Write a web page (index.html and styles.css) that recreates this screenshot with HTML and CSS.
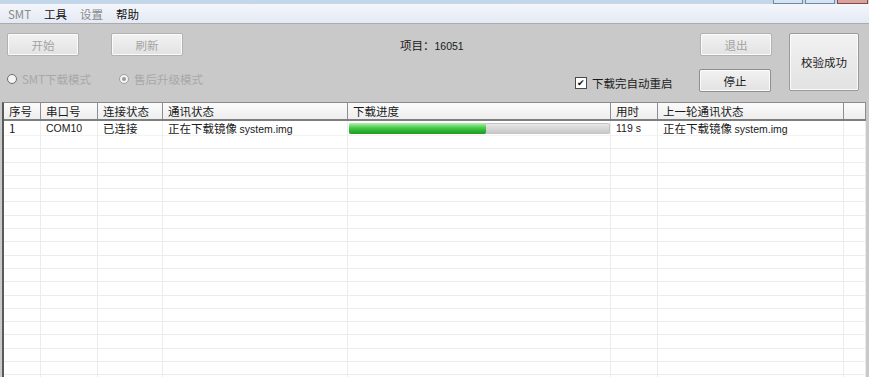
FILE: index.html
```html
<!DOCTYPE html>
<html lang="zh-CN">
<head>
    <meta charset="UTF-8">
    <title>SMT下载工具</title>
    <link rel="stylesheet" href="styles.css">
</head>
<body>
    <div class="titlebar">
        <div class="caption-btns">
            <span class="cap"></span>
            <span class="cap"></span>
            <span class="cap close"></span>
        </div>
    </div>
    <div class="menubar">
        <span class="menu off">SMT</span>
        <span class="menu">工具</span>
        <span class="menu off">设置</span>
        <span class="menu">帮助</span>
    </div>
    <div class="panel">
        <div class="controls">
            <div class="row">
                <button class="btn" disabled>开始</button>
                <button class="btn btn-refresh" disabled>刷新</button>
                <span class="project">项目：<span class="num">16051</span></span>
                <button class="btn btn-right" disabled>退出</button>
            </div>
            <div class="row row2">
                <label class="radio off"><span class="dot"></span>SMT下载模式</label>
                <label class="radio off radio2"><span class="dot checked"></span>售后升级模式</label>
                <label class="check"><span class="box">&#10004;</span>下载完自动重启</label>
                <button class="btn btn-stop">停止</button>
            </div>
        </div>
        <button class="btn btn-big">校验成功</button>
    </div>
    <div class="table">
        <div class="thead">
            <div class="c c1">序号</div>
            <div class="c c2">串口号</div>
            <div class="c c3">连接状态</div>
            <div class="c c4">通讯状态</div>
            <div class="c c5">下载进度</div>
            <div class="c c6">用时</div>
            <div class="c c7">上一轮通讯状态</div>
            <div class="c c8"></div>
        </div>
        <div class="tbody">
            <div class="tr first">
                <div class="c c1">1</div>
                <div class="c c2 lat">COM10</div>
                <div class="c c3">已连接</div>
                <div class="c c4">正在下载镜像 <span class="lat">system.img</span></div>
                <div class="c c5 prog-cell"><div class="prog"><div class="fill" style="width: 52.5%"></div></div></div>
                <div class="c c6 lat">119 s</div>
                <div class="c c7">正在下载镜像 <span class="lat">system.img</span></div>
                <div class="c c8"></div>
            </div>
            <div class="tr"></div><div class="tr"></div><div class="tr"></div><div class="tr"></div>
            <div class="tr"></div><div class="tr"></div><div class="tr"></div><div class="tr"></div>
            <div class="tr"></div><div class="tr"></div><div class="tr"></div><div class="tr"></div>
            <div class="tr"></div><div class="tr"></div><div class="tr"></div><div class="tr"></div>
            <div class="tr"></div><div class="tr"></div><div class="tr"></div><div class="tr"></div>
            <div class="cols">
                <div class="c c1"></div><div class="c c2"></div><div class="c c3"></div><div class="c c4"></div>
                <div class="c c5"></div><div class="c c6"></div><div class="c c7"></div><div class="c c8"></div>
            </div>
        </div>
    </div>
</body>
</html>
```

FILE: styles.css
```css
body {
    margin: 0;
    width: 869px;
    height: 377px;
    overflow: hidden;
    background: #c9c9c9;
    font-family: "Noto Sans CJK SC", "Liberation Sans", sans-serif;
    font-size: 11.5px;
    color: #1a1a1a;
}
.lat, .num {
    font-family: "Liberation Sans", Arial, sans-serif;
    font-size: 10.5px;
}
.titlebar {
    height: 4px;
    background: #c3d6ea;
    position: relative;
}
.caption-btns {
    position: absolute;
    top: 0;
    left: 773px;
    display: flex;
    gap: 2px;
}
.cap {
    width: 28px;
    height: 3px;
    border: 1px solid #6f8aa8;
    border-top: none;
    background: #d6e3f2;
}
.cap.close {
    width: 29px;
    background: #d8a39c;
    border-color: #8a4a44;
}
.menubar {
    height: 19px;
    display: flex;
    align-items: center;
    padding-left: 8px;
    background: linear-gradient(#f4f6fb, #e4e9f3);
    border-bottom: 1px solid #a9acb2;
}
.menu {
    margin-right: 13px;
    color: #111;
}
.menu.off {
    color: #8a8a8a;
}
.panel {
    display: flex;
    padding: 9px 0 0 7px;
    height: 68px;
}
.controls {
    width: 766px;
}
.row {
    display: flex;
    align-items: center;
    height: 23px;
}
.row2 {
    margin-top: 13px;
}
.btn {
    width: 72px;
    height: 23px;
    padding: 0;
    border: 1px solid #8e8e8e;
    border-radius: 2px;
    background: linear-gradient(#f2f2f2, #e2e2e2);
    box-shadow: inset 0 0 0 1px #fbfbfb;
    font-family: inherit;
    font-size: 11.5px;
    color: #1a1a1a;
}
.btn:disabled {
    color: #a3a3a3;
    border-color: #b2b2b2;
}
.btn-refresh {
    margin-left: 32px;
}
.project {
    margin-left: 217px;
    width: 300px;
}
.radio {
    display: flex;
    align-items: center;
    gap: 5px;
    margin-top: -4px;
}
.radio.off {
    color: #a8a8a8;
}
.radio2 {
    margin-left: 28px;
}
.dot {
    width: 8px;
    height: 8px;
    border-radius: 50%;
    background: #f4f4f4;
    border: 1px solid #6c6c6c;
    position: relative;
}
.dot.checked {
    border-color: #a0a0a0;
}
.dot.checked::after {
    content: "";
    position: absolute;
    left: 2px;
    top: 2px;
    width: 4px;
    height: 4px;
    border-radius: 50%;
    background: #9a9a9a;
}
.check {
    display: flex;
    align-items: center;
    gap: 5px;
    margin-left: 372px;
    margin-top: 4px;
    width: 124px;
}
.box {
    width: 10px;
    height: 10px;
    border: 1px solid #4a4a4a;
    background: #fff;
    font-size: 9px;
    line-height: 10px;
    text-align: center;
    color: #111;
}
.btn-big {
    width: 70px;
    height: 58px;
    margin-left: 16px;
    border-color: #9a9a9a;
}
.table {
    margin: 1px 3px 0 2px;
    height: 275px;
    overflow: hidden;
    background: #fff;
    border-left: 2px solid #5a5a5a;
    border-top: 1px solid #8a8a8a;
    box-sizing: border-box;
}
.thead, .tr, .cols {
    display: flex;
}
.thead {
    height: 16px;
    background: linear-gradient(#fbfbfb, #eeeeee);
    border-bottom: 2px solid #7e7e7e;
}
.thead .c {
    border-right: 1px solid #8e8e8e;
    line-height: 16px;
}
.c {
    box-sizing: border-box;
    padding-left: 5px;
    white-space: nowrap;
    overflow: hidden;
}
.c1 { width: 37px; }
.c2 { width: 57px; }
.c3 { width: 65px; }
.c4 { width: 185px; }
.c5 { width: 263px; }
.c6 { width: 47px; }
.c7 { width: 186px; }
.c8 { flex: 1; }
.tbody {
    position: relative;
    height: 260px;
}
.tr {
    height: 13.3px;
    border-bottom: 1px solid #ececec;
    box-sizing: border-box;
}
.tr.first {
    height: 15px;
    line-height: 15px;
    border-bottom-color: #f3f3f3;
}
.cols {
    position: absolute;
    top: 0;
    left: 0;
    right: 0;
    bottom: 0;
}
.cols .c {
    border-right: 1px solid #ececec;
}
.prog-cell {
    padding: 2px 1px 0 1px;
}
.prog {
    height: 11px;
    border-radius: 2px;
    background: linear-gradient(#ececec, #d6d6d6 50%, #c6c6c6);
    box-shadow: inset 0 0 0 1px #c4c4c4;
}
.fill {
    height: 100%;
    border-radius: 2px;
    background: linear-gradient(#b8f0b4, #4fce52 40%, #2db332 70%, #1f9a24);
}
```
